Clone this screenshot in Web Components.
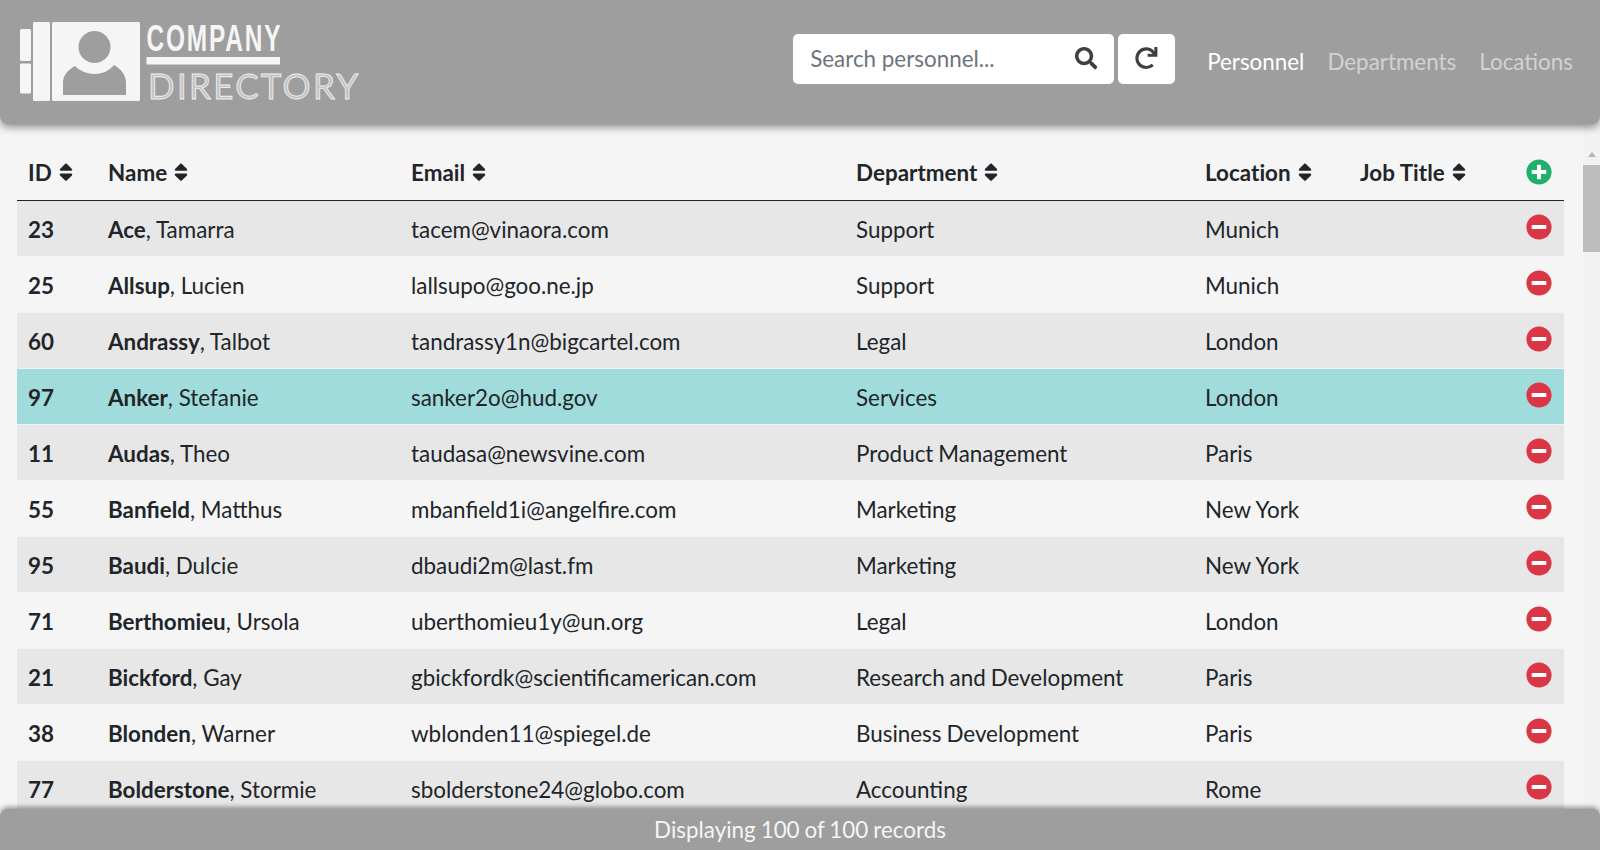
<!DOCTYPE html>
<html lang="en"><head><meta charset="utf-8"><title>Company Directory</title>
<style>
html,body{margin:0;height:100%;overflow:hidden;background:#f5f5f5;}
body{font-family:Lato,"Open Sans",sans-serif;font-size:22.4px;color:#212529;}
dir-app{height:850px;}
</style></head><body>
<dir-app>
  <dir-header slot="header"></dir-header>
  <dir-table slot="main"></dir-table>
  <dir-scrollbar slot="bar"></dir-scrollbar>
  <dir-footer slot="footer">Displaying 100 of 100 records</dir-footer>
</dir-app>
<script>
const P={
 search:['0 0 512 512','M505 442.7L405.3 343c-4.500-4.500-10.600-7-17-7H372c27.600-35.300 44-79.700 44-128C416 93.100 322.900 0 208 0S0 93.100 0 208s93.100 208 208 208c48.300 0 92.700-16.400 128-44v16.300c0 6.400 2.500 12.500 7 17l99.700 99.700c9.400 9.400 24.600 9.400 33.900 0l28.300-28.300c9.400-9.400 9.400-24.600.1-34zM208 336c-70.700 0-128-57.200-128-128 0-70.700 57.200-128 128-128 70.700 0 128 57.200 128 128 0 70.700-57.200 128-128 128z'],
 redo:['0 0 512 512','M500.33 0h-47.41a12 12 0 0 0-12 12.57l4 82.76A247.42 247.42 0 0 0 256 8C119.34 8 7.9 119.53 8 256.19 8.1 393.07 119.1 504 256 504a247.1 247.1 0 0 0 166.18-63.91 12 12 0 0 0 .48-17.43l-34-34a12 12 0 0 0-16.38-.55A176 176 0 1 1 402.1 157.8l-101.53-4.87a12 12 0 0 0-12.57 12v47.41a12 12 0 0 0 12 12h200.33a12 12 0 0 0 12-12V12a12 12 0 0 0-12-12z'],
 sort:['0 0 320 512','M41 288h238c21.400 0 32.100 25.900 17 41L177 448c-9.400 9.400-24.600 9.400-33.900 0L24 329c-15.100-15.100-4.400-41 17-41zm255-105L177 64c-9.400-9.400-24.600-9.400-33.900 0L24 183c-15.100 15.100-4.400 41 17 41h238c21.400 0 32.100-25.900 17-41z'],
 plus:['0 0 512 512','M256 8C119 8 8 119 8 256s111 248 248 248 248-111 248-248S393 8 256 8zm144 276c0 6.600-5.400 12-12 12h-92v92c0 6.600-5.400 12-12 12h-56c-6.600 0-12-5.400-12-12v-92h-92c-6.600 0-12-5.400-12-12v-56c0-6.600 5.400-12 12-12h92v-92c0-6.600 5.400-12 12-12h56c6.600 0 12 5.400 12 12v92h92c6.600 0 12 5.400 12 12v56z'],
 minus:['0 0 512 512','M256 8C119 8 8 119 8 256s111 248 248 248 248-111 248-248S393 8 256 8zM124 296c-6.600 0-12-5.400-12-12v-56c0-6.600 5.400-12 12-12h264c6.600 0 12 5.400 12 12v56c0 6.600-5.400 12-12 12H124z']
};
const icon=(n,h,c,bg)=>`<svg viewBox="${P[n][0]}" height="${h}" width="${h*parseInt(P[n][0].split(' ')[2])/512}" fill="${c}" aria-hidden="true" style="display:block;flex:none">${bg?`<circle cx="256" cy="256" r="190" fill="${bg}"/>`:''}<path d="${P[n][1]}"/></svg>`;

class DirElement extends HTMLElement{
  constructor(){super();this.attachShadow({mode:'open'});}
}
customElements.define('dir-app',class extends DirElement{
  constructor(){super();this.shadowRoot.innerHTML=`<style>
  :host{display:flex;flex-direction:column;overflow:hidden}
  .mid{flex:1;min-height:0;display:flex;overflow:hidden}
  .mid ::slotted(dir-table){flex:1;min-width:0}
  </style><slot name="header"></slot><div class="mid"><slot name="main"></slot><slot name="bar"></slot></div><slot name="footer"></slot>`;}
});
customElements.define('dir-logo',class extends DirElement{
  constructor(){super();this.shadowRoot.innerHTML=`<style>:host{display:block;width:362px;height:124px;flex:none}svg{display:block}</style>
  <svg width="362" height="124" viewBox="18 0 362 124" role="img" aria-label="Company Directory">
   <g fill="#f5f5f5">
    <rect x="20" y="29" width="11" height="32" rx="1.500"/><rect x="20" y="63.500" width="11" height="30" rx="1.500"/>
    <rect x="33" y="22" width="17" height="79" rx="1.500"/>
    <rect x="52" y="22" width="88" height="79" rx="1.500"/>
   </g>
   <circle cx="94.500" cy="47" r="16" fill="#9e9e9e"/>
   <path fill="#9e9e9e" d="M63 95V83c0-8 5-13 12-17 4 4 11 8 19.500 8S110 70 114 65c7 4 12 10 12 18v12z"/>
   <rect x="146.500" y="57" width="133.500" height="7.500" fill="#f5f5f5"/>
   <g transform="translate(146.500 51) scale(.66 1)"><text x="0" y="0" textLength="203" lengthAdjust="spacing" font-family="'Liberation Sans',sans-serif" font-weight="700" font-size="37" fill="#f5f5f5">COMPANY</text></g>
   <text x="148" y="98.500" textLength="210" lengthAdjust="spacing" font-family="Lato,sans-serif" font-weight="400" font-size="35" fill="#c4c4c4" stroke="#f0f0f0" stroke-width=".8">DIRECTORY</text>
  </svg>`;}
});
customElements.define('dir-search',class extends DirElement{
  constructor(){super();this.shadowRoot.innerHTML=`<style>
  :host{display:flex;gap:4px}
  .box,.btn{background:#fff;border-radius:5px;height:50px;box-sizing:border-box;display:flex;align-items:center}
  .box{width:321px;padding:0 17px 0 17px}
  .ph{flex:1;font-size:22.4px;color:#6c757d}
  .btn{width:57px;justify-content:center}
  </style><div class="box"><span class="ph">Search personnel...</span>${icon('search',22.4,'#3f3f3f')}</div><div class="btn">${icon('redo',22.4,'#3f3f3f')}</div>`;}
});
customElements.define('dir-nav',class extends DirElement{
  constructor(){super();this.shadowRoot.innerHTML=`<style>
  :host{display:flex;gap:23px;font-size:22.4px}
  a{color:rgba(255,255,255,.55);text-decoration:none;display:block}
  a.on{color:#fff}
  </style><a class="on">Personnel</a><a>Departments</a><a>Locations</a>`;}
});
customElements.define('dir-header',class extends DirElement{
  constructor(){super();this.shadowRoot.innerHTML=`<style>
  :host{display:flex;align-items:center;height:124px;box-sizing:border-box;background:#9e9e9e;padding:0 27px 0 18px;
    border-radius:0 0 8px 8px;box-shadow:0 3px 8px rgba(0,0,0,.45);position:relative;z-index:2;flex:none}
  .sp{flex:1}
  dir-search{margin-bottom:7px}
  dir-nav{margin-left:32px;margin-bottom:2px}
  </style><dir-logo></dir-logo><div class="sp"></div><dir-search></dir-search><dir-nav></dir-nav>`;}
});
const COLS='79px 303px 445px 349px 155px 1fr 51px';
customElements.define('dir-th',class extends DirElement{
  constructor(){super();this.shadowRoot.innerHTML=`<style>
  :host{display:flex;align-items:center;gap:7px;font-weight:700;padding-left:12px;letter-spacing:.03px}
  :host(.first){padding-left:11px}
  </style><slot></slot>${icon('sort',22.4,'#212529')}`;}
});
customElements.define('dir-row',class extends DirElement{
  connectedCallback(){
    const [id,last,first,email,dep,loc]=JSON.parse(this.getAttribute('data-v'));
    this.shadowRoot.innerHTML=`<style>
    :host{display:grid;grid-template-columns:${COLS};height:56px;box-sizing:border-box;align-items:center;border-bottom:1px solid #f2f2f2;flex:none;background:var(--bg,#f5f5f5)}
    div{padding-left:12px;padding-top:2px;white-space:nowrap}
    .id,b{font-weight:700}
    .id{padding-left:11px}
    .dep{word-spacing:-.8px}
    .ic{padding:0 0 3px;display:flex;justify-content:center}
    </style><div class="id">${id}</div><div><b>${last}</b>, ${first}</div><div>${email}</div><div class="dep">${dep}</div><div>${loc}</div><div></div><div class="ic">${icon('minus',26,'#dc3545','#fff')}</div>`;
  }
});
const D=[[23,'Ace','Tamarra','tacem@vinaora.com','Support','Munich'],
[25,'Allsup','Lucien','lallsupo@goo.ne.jp','Support','Munich'],
[60,'Andrassy','Talbot','tandrassy1n@bigcartel.com','Legal','London'],
[97,'Anker','Stefanie','sanker2o@hud.gov','Services','London'],
[11,'Audas','Theo','taudasa@newsvine.com','Product Management','Paris'],
[55,'Banfield','Matthus','mbanfield1i@angelfire.com','Marketing','New York'],
[95,'Baudi','Dulcie','dbaudi2m@last.fm','Marketing','New York'],
[71,'Berthomieu','Ursola','uberthomieu1y@un.org','Legal','London'],
[21,'Bickford','Gay','gbickfordk@scientificamerican.com','Research and Development','Paris'],
[38,'Blonden','Warner','wblonden11@spiegel.de','Business Development','Paris'],
[77,'Bolderstone','Stormie','sbolderstone24@globo.com','Accounting','Rome']];
customElements.define('dir-table',class extends DirElement{
  constructor(){super();
    const rows=D.map((r,i)=>`<dir-row data-v='${JSON.stringify(r)}' style="--bg:${i==3?'#a0dcdc':i%2?'#f5f5f5':'#e7e7e7'}"></dir-row>`).join('');
    this.shadowRoot.innerHTML=`<style>
    :host{display:block;overflow:hidden;padding:24px 19px 0 17px;background:#f5f5f5}
    .head{display:grid;grid-template-columns:${COLS};align-items:center;border-bottom:1px solid #212529;padding-bottom:4px;height:48px}
    .ic{display:flex;justify-content:center}
    .list{display:flex;flex-direction:column}
    </style><div class="head"><dir-th class="first">ID</dir-th><dir-th>Name</dir-th><dir-th>Email</dir-th><dir-th>Department</dir-th><dir-th>Location</dir-th><dir-th>Job Title</dir-th><div class="ic">${icon('plus',26,'#20b06c','#fff')}</div></div><div class="list">${rows}</div>`;
  }
});
customElements.define('dir-scrollbar',class extends DirElement{
  constructor(){super();this.shadowRoot.innerHTML=`<style>
  :host{display:flex;flex-direction:column;align-items:center;width:17px;flex:none;background:#f2f2f2;padding-top:28px;box-sizing:border-box}
  .a{width:0;height:0;border:4px solid transparent;border-bottom:5px solid #b5b5b5;border-top:0;margin-bottom:8px}
  .t{width:100%;height:87px;background:#bdbdbd}
  </style><div class="a"></div><div class="t"></div>`;}
});
customElements.define('dir-footer',class extends DirElement{
  constructor(){super();this.shadowRoot.innerHTML=`<style>
  :host{display:flex;align-items:center;justify-content:center;height:41px;flex:none;background:#9e9e9e;color:#f5f5f5;font-size:22.4px;word-spacing:-.8px;
    border-radius:8px 8px 0 0;box-shadow:0 -2px 5px rgba(0,0,0,.4);position:relative;z-index:2;margin-top:-8px}
  </style><slot></slot>`;}
});
</script>
</body></html>
